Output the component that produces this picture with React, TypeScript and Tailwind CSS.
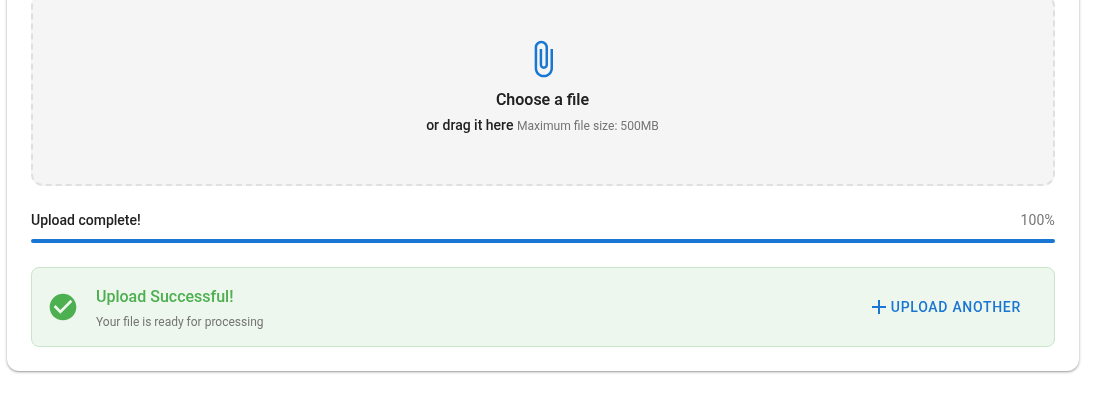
import { useState } from "react";

const AttachIcon = () => (
  <svg viewBox="0 0 24 24" className="-ml-[1px] w-10 h-10 fill-[#1976d2]">
    <path d="M16.5 6v11.5c0 2.21-1.79 4-4 4s-4-1.79-4-4V5c0-1.38 1.12-2.5 2.5-2.5s2.5 1.12 2.5 2.5v10.5c0 .55-.45 1-1 1s-1-.45-1-1V6H10v9.5c0 1.38 1.12 2.5 2.5 2.5s2.5-1.12 2.5-2.5V5c0-2.21-1.79-4-4-4S7 2.79 7 5v12.5c0 3.04 2.46 5.5 5.5 5.5s5.5-2.46 5.5-5.5V6h-1.5z" />
  </svg>
);

const CheckCircleIcon = () => (
  <svg viewBox="0 0 24 24" className="w-8 h-8 fill-[#4caf50]">
    <path d="M12 2C6.48 2 2 6.48 2 12s4.48 10 10 10 10-4.48 10-10S17.52 2 12 2zm-2 15-5-5 1.41-1.41L10 14.17l7.59-7.59L19 8l-9 9z" />
  </svg>
);

const AddIcon = () => (
  <svg viewBox="0 0 24 24" className="w-6 h-6 fill-[#1976d2]">
    <path d="M19 13h-6v6h-2v-6H5v-2h6V5h2v6h6v2z" />
  </svg>
);

const App = () => {
  const [progress] = useState<number>(100);

  return (
    <div className="w-[1094px] h-[402px] overflow-hidden bg-white font-['Roboto',sans-serif] text-[#212121]">
      <div className="mx-[7px] -mt-[30px] w-[1072px] rounded-xl bg-white p-6 shadow-[0_1px_3px_rgba(0,0,0,0.35),0_1px_1px_rgba(0,0,0,0.1)] [will-change:transform]">
        <div className="h-[192px] flex flex-col items-center pt-[43px] rounded-xl border-2 border-dashed border-[#e0e0e0] bg-[#f5f5f5]">
          <AttachIcon />
          <h3 className="mt-[9px] -ml-[1px] text-base font-semibold leading-6">Choose a file</h3>
          <p className="mt-[3px] -ml-[1px] text-sm font-medium leading-5">
            or drag it here <span className="text-[12.1px] font-normal text-[#757575]">Maximum file size: 500MB</span>
          </p>
        </div>

        <div className="mt-6">
          <div className="flex justify-between items-center mb-[9px]">
            <span className="text-sm font-medium leading-5">Upload complete!</span>
            <span className="text-sm leading-5 tracking-[0.15px] text-[#757575]">{progress}%</span>
          </div>
          <div className="h-1 rounded-sm bg-[#1976d2]" />
        </div>

        <div className="mt-6 h-20 flex items-center pl-[15px] pr-[33px] rounded-lg border border-[#c8e6c9] bg-[#edf7ed]">
          <CheckCircleIcon />
          <div className="ml-[17px] flex-1 pt-[1px]">
            <div className="text-base font-medium leading-6 text-[#4caf50]">Upload Successful!</div>
            <div className="mt-[4px] text-xs leading-[18px] text-[#757575]">Your file is ready for processing</div>
          </div>
          <button className="flex items-center text-sm font-medium tracking-[0.05em] text-[#1976d2]">
            <AddIcon />
            <span>UPLOAD ANOTHER</span>
          </button>
        </div>
      </div>
    </div>
  );
};

export default App;
